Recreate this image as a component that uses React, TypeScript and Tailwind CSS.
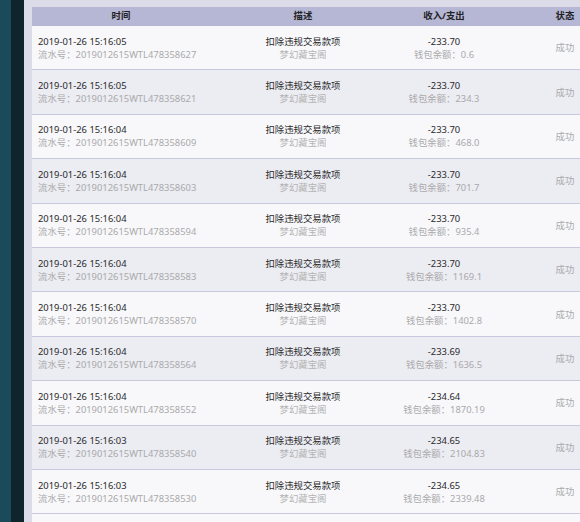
import React from "react";

const rows = [
  ["2019-01-26 15:16:05", "2019012615WTL478358627", "-233.70", "0.6"],
  ["2019-01-26 15:16:05", "2019012615WTL478358621", "-233.70", "234.3"],
  ["2019-01-26 15:16:04", "2019012615WTL478358609", "-233.70", "468.0"],
  ["2019-01-26 15:16:04", "2019012615WTL478358603", "-233.70", "701.7"],
  ["2019-01-26 15:16:04", "2019012615WTL478358594", "-233.70", "935.4"],
  ["2019-01-26 15:16:04", "2019012615WTL478358583", "-233.70", "1169.1"],
  ["2019-01-26 15:16:04", "2019012615WTL478358570", "-233.70", "1402.8"],
  ["2019-01-26 15:16:04", "2019012615WTL478358564", "-233.69", "1636.5"],
  ["2019-01-26 15:16:04", "2019012615WTL478358552", "-234.64", "1870.19"],
  ["2019-01-26 15:16:03", "2019012615WTL478358540", "-234.65", "2104.83"],
  ["2019-01-26 15:16:03", "2019012615WTL478358530", "-234.65", "2339.48"],
];

export default function App() {
  return (
    <div
      className="flex h-[522px] w-[580px] overflow-hidden bg-[#dcdce8]"
      style={{ fontFamily: '"Noto Sans", "Noto Sans CJK SC", sans-serif' }}
    >
      <div className="h-full w-[11px] shrink-0 bg-[#1b4a5b]" />
      <div className="h-full w-[13px] shrink-0 bg-[#10242c]" />
      <div className="h-full w-[8px] shrink-0 bg-[#dcdce8]" />
      <div className="flex w-[606px] shrink-0 flex-col pt-[7px]">
        <div className="flex h-[19px] shrink-0 items-center bg-[#b5b7d5] text-[9.4px] font-bold text-[#222]">
          <div className="w-[178px] text-center">时间</div>
          <div className="w-[186px] text-center">描述</div>
          <div className="w-[96px] text-center">收入/支出</div>
          <div className="flex-1 text-center">状态</div>
        </div>
        {rows.map((r, i) => (
          <div
            key={i}
            className={`box-border flex h-[44.4px] shrink-0 items-center border-b border-[#c9c9dd] text-[9.4px] leading-[13px] ${
              i % 2 === 0 ? "bg-[#f8f8fb]" : "bg-[#ececf3]"
            }`}
          >
            <div className="flex w-[178px] flex-col pl-[6px] whitespace-nowrap">
              <span className="text-[#2a2a2a]">{r[0]}</span>
              <span className="text-[#aaa]">流水号：{r[1]}</span>
            </div>
            <div className="flex w-[186px] flex-col items-center">
              <span className="text-[#2a2a2a]">扣除违规交易款项</span>
              <span className="text-[#b4b4b4]">梦幻藏宝阁</span>
            </div>
            <div className="flex w-[96px] flex-col items-center">
              <span className="text-[#2a2a2a]">{r[2]}</span>
              <span className="whitespace-nowrap text-[#aaa]">钱包余额：{r[3]}</span>
            </div>
            <div className="flex-1 text-center text-[#aaa]">成功</div>
          </div>
        ))}
        <div className="h-[44.4px] shrink-0 bg-[#f8f8fb]" />
      </div>
    </div>
  );
}
